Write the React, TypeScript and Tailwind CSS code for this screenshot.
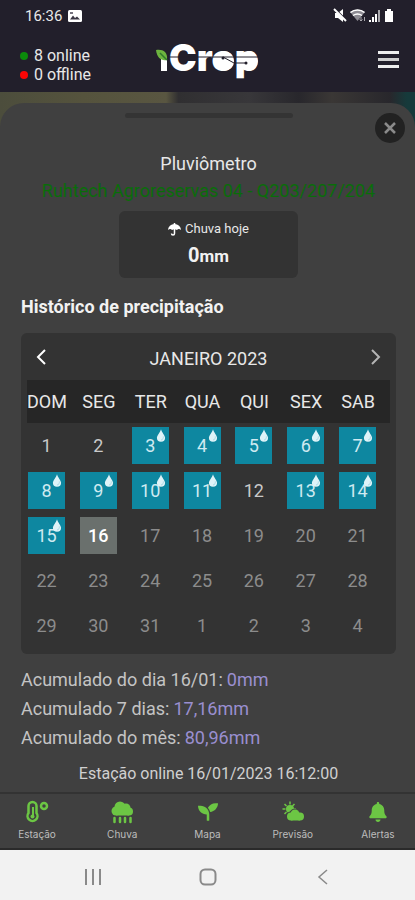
import type { ReactNode } from 'react';
import clsx from 'clsx';
import { FaBell, FaSeedling } from 'react-icons/fa';

type Day = { day: number; rain?: boolean; state: 'past' | 'today' | 'future' };

const WEEKDAYS = ['DOM', 'SEG', 'TER', 'QUA', 'QUI', 'SEX', 'SAB'];
const RAINY = [3, 4, 5, 6, 7, 8, 9, 10, 11, 13, 14, 15];
const TODAY = 16;

// January 2023 starts on a sunday, the last row spills into february
const DAYS: Day[] = Array.from({ length: 35 }, (_, i) => {
  const n = i + 1;
  return {
    day: n > 31 ? n - 31 : n,
    rain: RAINY.includes(n),
    state: n < TODAY ? 'past' : n === TODAY ? 'today' : 'future',
  };
});

const WEEKS = [0, 1, 2, 3, 4].map((w) => DAYS.slice(w * 7, w * 7 + 7));

const TOTALS = [
  { label: 'Acumulado do dia 16/01:', value: '0mm' },
  { label: 'Acumulado 7 dias:', value: '17,16mm' },
  { label: 'Acumulado do mês:', value: '80,96mm' },
];

function Logo() {
  return (
    <svg width="112" height="54" viewBox="-5 -7 112 54" role="img" aria-label="iCrop">
      <g fill="#fff">
        <rect x="5" y="19" width="6" height="13" />
        <text x="13" y="32" fontSize="37" fontWeight="900" fontFamily="Inter, sans-serif">
          Crop
        </text>
        <circle cx="68" cy="22" r="10" />
        <circle cx="92" cy="22" r="10" />
      </g>
      <path d="M0 11c6-1 12 1 11 10-6 1-10-2-11-10z" fill="#6cb33f" />
      <path d="M4 14l7 7" stroke="#2f7a2b" strokeWidth="1.5" />
      <path d="M12 18h91" stroke="#221f2b" strokeWidth="1" />
      <path d="M67 18l11 6h12" stroke="#221f2b" strokeWidth="1" fill="none" />
      <circle cx="67" cy="19" r="1.5" fill="#221f2b" />
      <circle cx="90" cy="24" r="1.5" fill="#221f2b" />
    </svg>
  );
}

function StatusIcons() {
  return (
    <svg width="62" height="16" viewBox="0 0 62 16" fill="#fff" aria-hidden="true">
      <path d="M2 5h3l5-4v13l-5-4H2z" />
      <path d="M2 1l12 12" stroke="#221f2b" strokeWidth="2" />
      <path d="M1 1l12 12" stroke="#fff" strokeWidth="2" />
      <path d="M17 4c4-3.5 11-3.5 15 0l-7.500 9z" fill="#8d8b93" />
      <path d="M17.500 4.500c4-3.500 10-3.500 14 0M20 7.500c3-2 6-2 9 0" stroke="#fff" strokeWidth="1.5" fill="none" />
      <path d="M28 9v4m-1.500-1.500L28 13l1.500-1.500M31.500 13V9" stroke="#a9a8ad" strokeWidth="1" fill="none" />
      <path d="M36 12h2v2h-2zM39 9h2v5h-2zM42 6h2v8h-2z" />
      <path d="M45 2h2v12h-2z" fill="#a9a8ad" />
      <path d="M52 3h2V1h4v2h2v11h-8z" />
    </svg>
  );
}

function Drop() {
  return (
    <svg
      className="absolute top-0.5 right-[3px]"
      width="10"
      height="13"
      viewBox="0 0 11 14"
      aria-hidden="true"
    >
      <path d="M5.5 0C6.5 4 10 6.5 10 9.5a4.5 4.3 0 0 1-9 0C1 6.5 4.5 4 5.5 0z" fill="#dff3f8" />
      <path d="M8 8c.5 2-.5 3.500-2.500 4" stroke="#a5d7e4" strokeWidth="1" fill="none" />
    </svg>
  );
}

function UmbrellaIcon() {
  return (
    <svg width="13" height="13" viewBox="0 0 13 13" fill="#fff" aria-hidden="true">
      <path d="M0 7a6.500 6 0 0 1 13 0c-1.500-1.300-3-1.300-4 0-1.500-1-3.500-1-5 0-1-1.300-2.500-1.300-4 0z" />
      <path d="M6.500 0v10.500a1.500 1.500 0 0 1-3 0" stroke="#fff" strokeWidth="1.5" fill="none" />
    </svg>
  );
}

function ThermometerIcon() {
  return (
    <svg width="24" height="24" viewBox="0 0 24 24" fill="none" stroke="#6cc644" aria-hidden="true">
      <path d="M3.500 6a4 4 0 0 1 8 0v7a5 5 0 1 1-8 0z" strokeWidth="2.5" />
      <path d="M8 7v8" strokeWidth="2" />
      <circle cx="7.500" cy="16.500" r="2" fill="#6cc644" stroke="none" />
      <circle cx="19" cy="6" r="3" strokeWidth="2.5" />
    </svg>
  );
}

function RainIcon() {
  return (
    <svg width="24" height="24" viewBox="0 0 24 24" fill="#6cc644" aria-hidden="true">
      <circle cx="6" cy="11" r="4.500" />
      <circle cx="10" cy="7" r="5.500" />
      <circle cx="16" cy="8" r="4.500" />
      <circle cx="19" cy="11.500" r="4" />
      <rect x="6" y="8" width="13" height="7.500" />
      <path
        d="M4.500 18v4M10 18v4M15 18v4M20.500 18v4"
        stroke="#6cc644"
        strokeWidth="2.5"
        strokeLinecap="round"
      />
    </svg>
  );
}

function CloudSunIcon() {
  return (
    <svg width="24" height="24" viewBox="0 0 24 24" fill="#6cc644" aria-hidden="true">
      <circle cx="9" cy="9" r="4" />
      <path
        d="M9 1.500v3M9 13v3.500M1.500 9h3M13 9h2M3.500 4l2 2M3.500 14l2-2M13.500 4l-2 2"
        stroke="#6cc644"
        strokeWidth="1.5"
      />
      <g stroke="#404040" strokeWidth="2">
        <circle cx="10" cy="16.500" r="4" />
        <circle cx="14" cy="14" r="4.500" />
        <circle cx="19" cy="16.500" r="4" />
      </g>
      <g>
        <circle cx="10" cy="16.500" r="4" />
        <circle cx="14" cy="14" r="4.500" />
        <circle cx="19" cy="16.500" r="4" />
        <rect x="10" y="14" width="9" height="6.500" />
      </g>
    </svg>
  );
}

function NavItem({ label, children }: { label: string; children: ReactNode }) {
  return (
    <a href="#" className="flex w-12 flex-col items-center gap-0.5 text-[#bdbdbd]">
      <span className="flex h-6 items-center text-[#6cc644]">{children}</span>
      <span className="font-['Inter',sans-serif] text-[10px] leading-4">{label}</span>
    </a>
  );
}

function Calendar() {
  return (
    <section className="rounded-md bg-[#333333] px-1.5 pb-1.5">
      <div className="flex h-[47px] items-center justify-between px-1.5 text-[#e8e8e8]">
        <button type="button" aria-label="Mês anterior" className="flex w-4 justify-center">
          <svg width="12" height="18" viewBox="0 0 12 18" fill="none" stroke="#fff" strokeWidth="2">
            <path d="M10 2L3 9l7 7" />
          </svg>
        </button>
        <h3 className="pt-1 text-[18px] leading-6">JANEIRO 2023</h3>
        <button type="button" aria-label="Próximo mês" className="flex w-4 justify-center">
          <svg width="12" height="18" viewBox="0 0 12 18" fill="none" stroke="#b5b5b5" strokeWidth="2">
            <path d="M2 2l7 7-7 7" />
          </svg>
        </button>
      </div>
      <table className="w-full table-fixed border-collapse">
        <thead>
          <tr className="h-[43px] bg-[#262626]">
            {WEEKDAYS.map((name) => (
              <th key={name} scope="col" className="p-0 text-left font-normal">
                <span className="flex w-10 justify-center text-[18px] leading-6 text-[#e8e8e8]">{name}</span>
              </th>
            ))}
          </tr>
        </thead>
        <tbody>
          {WEEKS.map((week, w) => (
            <tr key={w} className="h-[45px]">
              {week.map(({ day, rain, state }) => (
                <td key={day} className="p-0 pl-px">
                  <button
                    type="button"
                    className={clsx(
                      'relative flex size-[37px] items-center justify-center text-[18px] leading-6',
                      rain && 'bg-[#0e87a0] text-[#cfeaf1]',
                      !rain && state === 'past' && 'text-[#c9c9c9]',
                      state === 'today' && 'bg-[#6a706d] font-medium text-white',
                      state === 'future' && 'text-[#8c8c8c]',
                    )}
                  >
                    {day}
                    {rain && <Drop />}
                  </button>
                </td>
              ))}
            </tr>
          ))}
        </tbody>
      </table>
    </section>
  );
}

export default function App() {
  return (
    <div className="flex min-h-screen flex-col bg-[#404040] font-['Roboto',sans-serif]">
      <header className="bg-[#221f2b] text-[#e8e8e8]">
        <div className="flex h-8 items-center justify-between pr-5 pl-[25px]">
          <div className="flex items-center gap-1.5 text-[15px] leading-5">
            <span>16:36</span>
            <svg width="14" height="12" viewBox="0 0 14 12" aria-hidden="true">
              <rect width="14" height="12" rx="1.5" fill="#fff" />
              <path d="M2 9.500l3-4 2 2.500 2-1.500 3 3z" fill="#3a3744" />
              <path d="M2 2h3v2H2z" fill="#77747f" />
            </svg>
          </div>
          <StatusIcons />
        </div>
        <div className="grid h-[60px] grid-cols-3 items-start px-4">
          <ul className="pt-3.5 pl-1 text-base leading-[19px]">
            <li className="flex items-center gap-1.5">
              <span className="size-2 rounded-full bg-[#0b8a0b]" />8 online
            </li>
            <li className="flex items-center gap-1.5">
              <span className="size-2 rounded-full bg-[#fb0505]" />0 offline
            </li>
          </ul>
          <div className="flex justify-center">
            <Logo />
          </div>
          <button type="button" aria-label="Menu" className="flex flex-col gap-1 justify-self-end pt-[19px]">
            <span className="h-[3px] w-[21px] bg-[#eeeeee]" />
            <span className="h-[3px] w-[21px] bg-[#cfcfcf]" />
            <span className="h-[3px] w-[21px] bg-[#eeeeee]" />
          </button>
        </div>
      </header>

      {/* map peeking out behind the sheet */}
      <div className="flex flex-1 flex-col bg-[linear-gradient(90deg,#4c4d3c_0%,#55533d_20%,#595641_40%,#302f31_43%,#38373a_60%,#28272c_72%,#3a3735_80%,#28272c_94%,#163a3b_98%)] pt-[11px]">
        <main className="relative flex-1 rounded-t-3xl bg-[#404040] pr-[19px] pl-[21px] pt-2.5 text-[#e8e8e8]">
          <div className="mx-auto h-[5px] w-[168px] rounded-full bg-[#343434]" />
          <button
            type="button"
            aria-label="Fechar"
            className="absolute top-2.5 right-2.5 flex size-[30px] items-center justify-center rounded-full bg-[#222222]"
          >
            <svg width="12" height="12" viewBox="0 0 12 12" stroke="#8a8a8a" strokeWidth="2.5">
              <path d="M1 1l10 10M11 1L1 11" />
            </svg>
          </button>

          <h1 className="mt-[34px] text-center text-lg leading-6">Pluviômetro</h1>
          <p className="mt-[3px] text-center text-[18px] leading-6 text-[#0a6c0a]">
            Ruhtech Agroreservas 04 - Q203/207/204
          </p>
          <div className="mx-auto mt-2 flex h-[67px] w-[179px] flex-col items-center rounded-md bg-[#333333] pt-2">
            <div className="flex items-center gap-1 text-[13px] leading-5">
              <UmbrellaIcon />
              Chuva hoje
            </div>
            <p className="mt-0.5 text-[17px] leading-7 font-bold text-[#f2f2f2]">
              <span className="text-xl">0</span>mm
            </p>
          </div>

          <h2 className="mt-[17px] mb-3.5 text-[18px] leading-6 font-bold text-[#f2f2f2]">
            Histórico de precipitação
          </h2>
          <Calendar />

          <dl className="mt-[11px] text-[18px] leading-[29px] text-[#c4c4c4]">
            {TOTALS.map(({ label, value }) => (
              <div key={label} className="flex gap-1">
                <dt>{label}</dt>
                <dd className="text-[#9a8fd0]">{value}</dd>
              </div>
            ))}
          </dl>
          <p className="mt-2.5 pb-[3px] text-center text-base leading-6 text-[#d0d0d0]">
            Estação online 16/01/2023 16:12:00
          </p>
        </main>
      </div>

      <nav className="flex h-[58px] justify-between border-t-2 border-b-2 border-t-[#333333] border-b-[#2a2a2a] bg-[#404040] px-[13px] pt-1.5">
        <NavItem label="Estação">
          <ThermometerIcon />
        </NavItem>
        <NavItem label="Chuva">
          <RainIcon />
        </NavItem>
        <NavItem label="Mapa">
          <FaSeedling className="size-5" />
        </NavItem>
        <NavItem label="Previsão">
          <CloudSunIcon />
        </NavItem>
        <NavItem label="Alertas">
          <FaBell className="size-5" />
        </NavItem>
      </nav>

      <footer className="flex h-[50px] items-center justify-around bg-[#f2f2f2] px-[35px] pt-1">
        <button type="button" aria-label="Recentes">
          <svg width="18" height="16" viewBox="0 0 18 16" stroke="#8a8a8a" strokeWidth="2">
            <path d="M2 0v16M9 0v16M16 0v16" />
          </svg>
        </button>
        <button type="button" aria-label="Início">
          <svg width="18" height="18" viewBox="0 0 18 18" fill="none" stroke="#8a8a8a" strokeWidth="2">
            <rect x="1.500" y="1.500" width="15" height="15" rx="4.500" />
          </svg>
        </button>
        <button type="button" aria-label="Voltar">
          <svg width="18" height="18" viewBox="0 0 18 18" fill="none" stroke="#8a8a8a" strokeWidth="1.5">
            <path d="M13 2L5 9l8 7" />
          </svg>
        </button>
      </footer>
    </div>
  );
}
